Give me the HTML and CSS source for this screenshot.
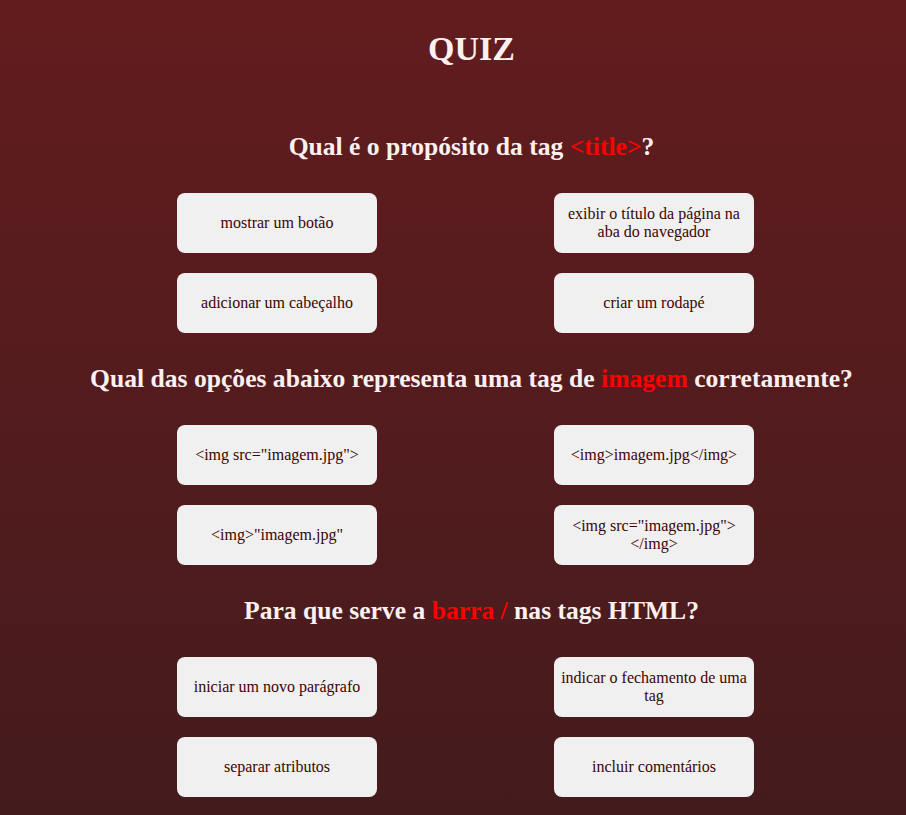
FILE: index.html
```html
<!DOCTYPE html>
<html lang="pt-BR">
<head>
<meta charset="UTF-8">
<title>Quiz</title>
<link rel="stylesheet" href="styles.css">
</head>
<body>
<main class="page">
  <h1 class="title">QUIZ</h1>
  <section class="question">
    <h2 class="question-text">Qual é o propósito da tag <span class="hl">&lt;title&gt;</span>?</h2>
    <div class="options">
      <button class="option">mostrar um botão</button>
      <button class="option">exibir o título da página na aba do navegador</button>
      <button class="option">adicionar um cabeçalho</button>
      <button class="option">criar um rodapé</button>
    </div>
  </section>
  <section class="question">
    <h2 class="question-text">Qual das opções abaixo representa uma tag de <span class="hl">imagem</span> corretamente?</h2>
    <div class="options">
      <button class="option">&lt;img src="imagem.jpg"&gt;</button>
      <button class="option">&lt;img&gt;imagem.jpg&lt;/img&gt;</button>
      <button class="option">&lt;img&gt;"imagem.jpg"</button>
      <button class="option">&lt;img src="imagem.jpg"&gt;&lt;/img&gt;</button>
    </div>
  </section>
  <section class="question">
    <h2 class="question-text">Para que serve a <span class="hl">barra /</span> nas tags HTML?</h2>
    <div class="options">
      <button class="option">iniciar um novo parágrafo</button>
      <button class="option">indicar o fechamento de uma tag</button>
      <button class="option">separar atributos</button>
      <button class="option">incluir comentários</button>
    </div>
  </section>
</main>
</body>
</html>
```
FILE: styles.css
```css
html, body {
  margin: 0;
  padding: 0;
}
body {
  min-height: 815px;
  background: linear-gradient(to bottom, #621c1e, #441b1d);
  font-family: "Liberation Serif", "Times New Roman", serif;
  color: #fdf0f0;
}
.page {
  display: flex;
  flex-direction: column;
  align-items: center;
  padding-top: 30px;
  padding-left: 37px;
}
.title {
  margin: 0;
  font-size: 34px;
  line-height: 37px;
  font-weight: bold;
}
.question {
  display: flex;
  flex-direction: column;
  align-items: center;
  margin-top: 32px;
}
.question:first-of-type {
  margin-top: 66px;
}
.question-text {
  margin: 0 0 32px;
  font-size: 25.6px;
  line-height: 28px;
  font-weight: bold;
  text-align: center;
  white-space: nowrap;
}
.hl {
  color: #ff0000;
}
.options {
  display: grid;
  grid-template-columns: 200px 200px;
  column-gap: 177px;
  row-gap: 20px;
  margin-right: 12px;
}
.option {
  width: 200px;
  height: 60px;
  padding: 1px 6px;
  border: none;
  border-radius: 8px;
  background: #f0f0f0;
  color: #3a0505;
  font-family: "Liberation Serif", "Times New Roman", serif;
  font-size: 16px;
  line-height: 18px;
  text-align: center;
}
```
